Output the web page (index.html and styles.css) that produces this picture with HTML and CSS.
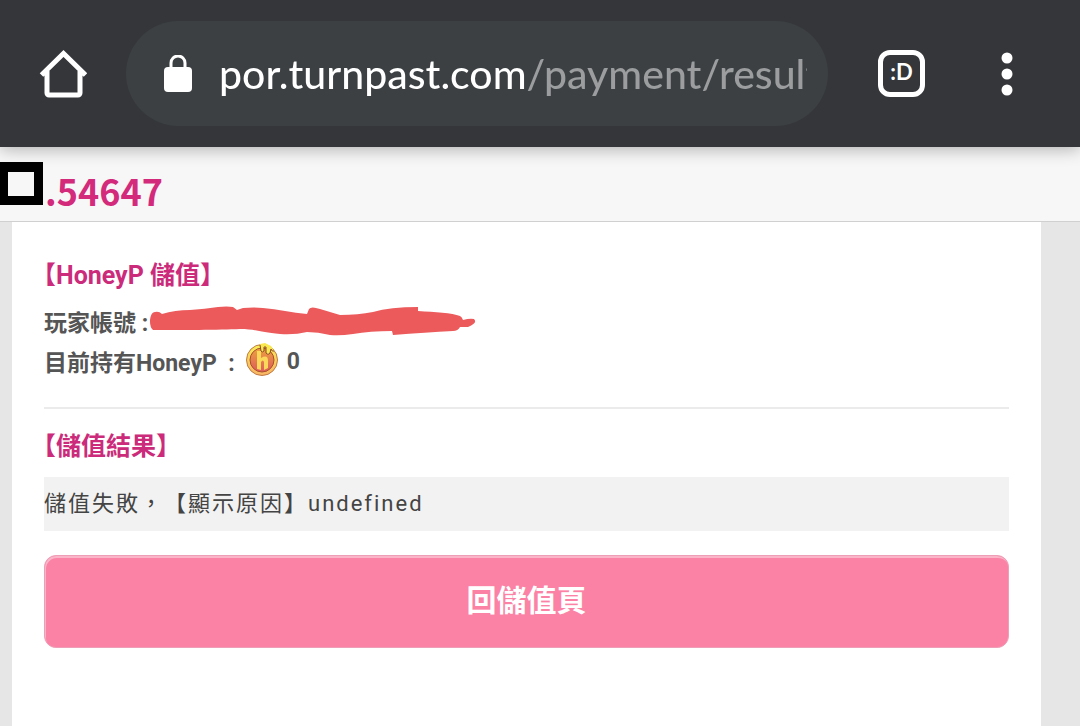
FILE: index.html
```html
<!DOCTYPE html>
<html lang="zh-Hant">
<head>
    <meta charset="UTF-8">
    <meta name="viewport" content="width=device-width, initial-scale=1">
    <title>HoneyP 儲值</title>
    <link rel="stylesheet" href="styles.css">
</head>
<body>

<div class="browser">
    <button type="button" class="icon-btn" aria-label="首頁">
        <svg width="48" height="48" viewBox="0 0 48 48">
            <path d="M2.500 25 L24.500 3.500 L46.500 25 M8 21 V43 a2 2 0 0 0 2 2 H39 a2 2 0 0 0 2 -2 V21" fill="none" stroke="#fff" stroke-width="5"/>
        </svg>
    </button>
    <div class="address">
        <svg class="lock" width="30" height="38" viewBox="0 0 30 38">
            <path d="M8 14 V8 a7 7 0 0 1 14 0 V14" fill="none" stroke="#fff" stroke-width="3"/>
            <rect x="1" y="12" width="28" height="25" rx="4" fill="#fff"/>
        </svg>
        <input type="text" class="url" aria-label="網址" value="por.turnpast.com/payment/result">
    </div>
    <button type="button" class="tabs" aria-label="分頁">:D</button>
    <button type="button" class="icon-btn" aria-label="選單">
        <svg width="12" height="44" viewBox="0 0 12 44">
            <circle cx="6" cy="6" r="5.500" fill="#fff"/>
            <circle cx="6" cy="22" r="5.500" fill="#fff"/>
            <circle cx="6" cy="38" r="5.500" fill="#fff"/>
        </svg>
    </button>
</div>

<div class="site-head">
    <span class="mask"></span>
    <span class="number">.54647</span>
</div>

<div class="content">
    <h2>【HoneyP 儲值】</h2>
    <div class="info">
        <p>玩家帳號 :<svg class="scribble" width="326" height="34" viewBox="0 0 326 34">
            <path d="M0 18 C0 12 2 8 5 8 Q9 7 12 10 Q25 6 40 6 Q55 5 68 3 Q77 2 83 3 L87 6 L93 4 Q104 3 113 4 C128 5 142 9 157 10 L159 5 Q161 2 170 5 L190 11 Q208 11 223 8 Q240 3 268 3 L268 7 C285 8 302 9 310 12 Q312 13 313 16 Q320 14 324 15 Q328 19 318 23 H310 Q308 27 303 27 C285 28 265 29 243 31 L242 27 Q220 27 203 30 Q190 32 180 31 Q168 28 157 28 Q145 31 130 30 C110 28 105 25 90 25 C70 26 30 26 3 26 Q0 23 0 18Z" fill="#ec5a5c"/>
        </svg></p>
        <p>目前持有HoneyP&nbsp;&nbsp;:<svg class="coin" width="34" height="34" viewBox="0 0 34 34">
            <defs>
                <linearGradient id="rim" x1="0" y1="0" x2="0" y2="1">
                    <stop offset="0" stop-color="#f9ee55"/>
                    <stop offset="1" stop-color="#f8b465"/>
                </linearGradient>
                <linearGradient id="face" x1="0" y1="0" x2="0" y2="1">
                    <stop offset="0" stop-color="#eda33f"/>
                    <stop offset="1" stop-color="#dd5a5c"/>
                </linearGradient>
            </defs>
            <circle cx="17" cy="18" r="15.500" fill="url(#rim)" stroke="#c07a45" stroke-width="1"/>
            <circle cx="17" cy="18" r="12" fill="url(#face)" stroke="#a8502f" stroke-width="1"/>
            <path d="M12 9 H16 V16 Q23 12 23 19 V26 L19 28 V20 Q18 17 16 20 V28 L12 27 Z" fill="#f9d85a"/>
            <path d="M15 2 L16 9 Q17 11 19 9 V5 H21 V11 Q23 14 25 11 L26 7 Q27 10 29 9 L26 4 L20 1 Z" fill="#f9e84f"/>
            <path d="M15 3 L16 9 Q17 11 19 9 V5 H21 V11 Q23 14 25 11 L26 7 Q27 10 29 9" fill="none" stroke="#8d4a28" stroke-width="1"/>
        </svg>0</p>
    </div>
    <hr>
    <h2>【儲值結果】</h2>
    <p class="message">儲值失敗，【顯示原因】undefined</p>
    <button type="button" class="back">回儲值頁</button>
</div>

</body>
</html>
```
FILE: styles.css
```css
* {
    box-sizing: border-box;
}
body {
    margin: 0;
    min-height: 100vh;
    display: flex;
    flex-direction: column;
    background: #e6e6e6;
    color: #555;
    font-family: Roboto, "Noto Sans CJK TC", sans-serif;
}
button {
    border: 0;
    padding: 0;
    background: none;
    cursor: pointer;
}
h2, p {
    margin: 0;
}

/* browser bar */
.browser {
    position: relative;
    display: flex;
    align-items: center;
    padding: 21px 67px 21px 39px;
    background: #35363a;
    box-shadow: 0 2px 16px rgba(0, 0, 0, 0.3);
}
.icon-btn svg {
    display: block;
}
.address {
    flex: 1;
    min-width: 0;
    display: flex;
    align-items: center;
    height: 105px;
    margin: 0 50px 0 39px;
    padding: 0 21px 0 37px;
    border-radius: 53px;
    background: #3c4043;
}
.lock {
    flex: none;
    margin-right: 26px;
}
/* host in white, path in grey */
.url {
    flex: 1;
    min-width: 0;
    height: 60px;
    border: 0;
    padding: 0;
    outline: 0;
    font-family: Lato, sans-serif;
    font-size: 41px;
    font-weight: 500;
    color: transparent;
    background: linear-gradient(to right, #fff 309px, #9b9d9f 309px);
    -webkit-background-clip: text;
    background-clip: text;
}
.tabs {
    width: 47px;
    height: 47px;
    margin-right: 76px;
    padding-bottom: 4px;
    border: 5px solid #fff;
    border-radius: 12px;
    color: #fff;
    font-family: Lato, sans-serif;
    font-size: 22px;
    font-weight: bold;
    line-height: 32px;
}

/* site header */
.site-head {
    display: flex;
    align-items: flex-start;
    height: 75px;
    padding-top: 15px;
    border-bottom: 1px solid #d0d0d0;
    background: #f7f7f7;
}
.mask {
    width: 43px;
    height: 43px;
    border: solid #000;
    border-width: 10px 9px 9px 8px;
}
.number {
    margin-left: 2px;
    color: #d42a7b;
    font-family: "Noto Sans CJK TC", sans-serif;
    font-size: 36px;
    font-weight: bold;
    line-height: 56px;
}

/* page */
.content {
    flex: 1;
    margin: 0 39px 0 12px;
    padding: 36px 32px;
    background: #fff;
}
h2 {
    margin-left: -13px;
    color: #cb2b7a;
    font-size: 25px;
    line-height: 36px;
}
.info {
    margin-top: 7px;
    font-size: 23px;
    font-weight: bold;
}
.info p {
    display: flex;
    align-items: center;
    height: 40px;
    white-space: nowrap;
}
.scribble {
    margin-left: 2px;
}
.coin {
    margin: 0 8px 4px 10px;
}
hr {
    height: 2px;
    margin: 26px 0 20px;
    border: 0;
    background: #ebebeb;
}
.message {
    margin-top: 12px;
    background: #f2f2f2;
    color: #444;
    font-size: 22px;
    line-height: 54px;
    letter-spacing: 2px;
    text-spacing-trim: space-all;
}
.back {
    display: block;
    width: 100%;
    height: 93px;
    margin-top: 24px;
    padding-bottom: 8px;
    border: 1px solid #ee9fb7;
    border-radius: 12px;
    background: #fb82a5;
    box-shadow: inset 1px 2px 0 #fbb5c9;
    color: #fff;
    font-family: inherit;
    font-size: 30px;
    font-weight: bold;
}
```
